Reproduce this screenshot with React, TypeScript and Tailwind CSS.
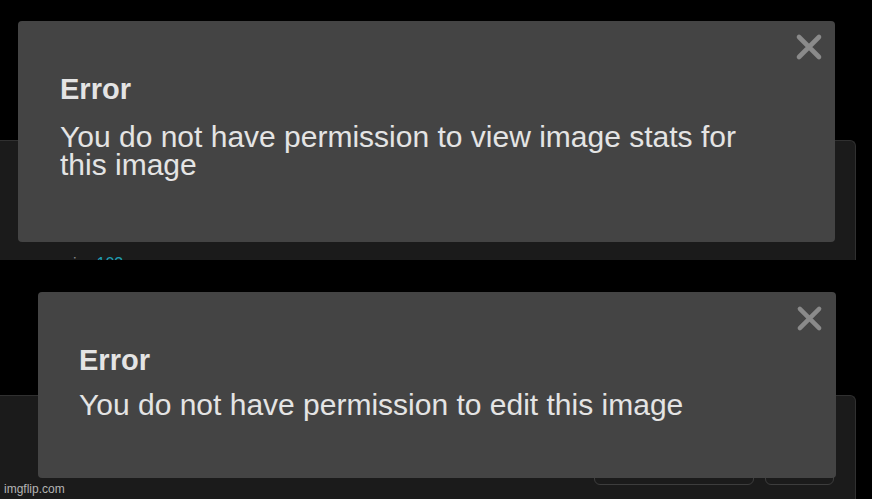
import React from "react";

function CloseX({ size }: { size: number }) {
  return (
    <svg width={size} height={size} viewBox="0 0 28 28" fill="none">
      <path d="M4 4 L24 24 M24 4 L4 24" stroke="#8a8a8a" strokeWidth="4.6" strokeLinecap="round" />
    </svg>
  );
}

export default function App() {
  const font = { fontFamily: '"Liberation Sans", Arial, Helvetica, sans-serif' };
  return (
    <div className="relative w-[872px] h-[499px] bg-black overflow-hidden flex flex-col" style={font}>
      {/* top section */}
      <div className="relative h-[260px] flex flex-col pt-[140px] overflow-hidden">
        <div className="flex-1 w-[856px] bg-[#1b1b1b] border-t border-r border-[#303030] rounded-tr-[6px] overflow-hidden">
          <div className="mt-[113px] pl-[73px] flex gap-[20px] text-[16px] leading-[20px]">
            <span className="text-[#888]">i</span>
            <span className="text-[#1f9fb3]">103</span>
          </div>
        </div>
        <div className="absolute left-[18px] top-[21px] w-[817px] h-[221px] bg-[#444444] rounded-[4px] pl-[42px] pt-[52px]">
          <div className="absolute right-[12px] top-[12px]">
            <CloseX size={28} />
          </div>
          <div className="text-[29px] leading-[33px] font-bold text-[#e4e4e4]">Error</div>
          <div className="mt-[17px] text-[30px] leading-[28px] text-[#e4e4e4] w-[700px]">
            You do not have permission to view image stats for this image
          </div>
        </div>
      </div>

      {/* bottom section */}
      <div className="relative flex-1 flex flex-col pt-[135px]">
        <div className="flex-1 w-[856px] bg-[#1b1b1b] border-t border-r border-[#303030] rounded-tr-[6px] flex justify-end pt-[48px] pr-[21px] gap-[11px]">
          <div className="w-[160px] h-[41px] border border-[#3d3d3d] rounded-[6px]" />
          <div className="w-[69px] h-[41px] border border-[#3d3d3d] rounded-[6px]" />
        </div>
        <div className="absolute left-[38px] top-[32px] w-[798px] h-[186px] bg-[#444444] rounded-[4px] pl-[41px] pt-[52px]">
          <div className="absolute right-[13px] top-[13px]">
            <CloseX size={27} />
          </div>
          <div className="text-[29px] leading-[33px] font-bold text-[#e4e4e4]">Error</div>
          <div className="mt-[14px] text-[30px] leading-[28px] text-[#e4e4e4]">
            You do not have permission to edit this image
          </div>
        </div>
        <div className="absolute left-[4px] bottom-[3px] text-[12px] leading-[14px] text-[#b4b4b4]">imgflip.com</div>
      </div>
    </div>
  );
}
